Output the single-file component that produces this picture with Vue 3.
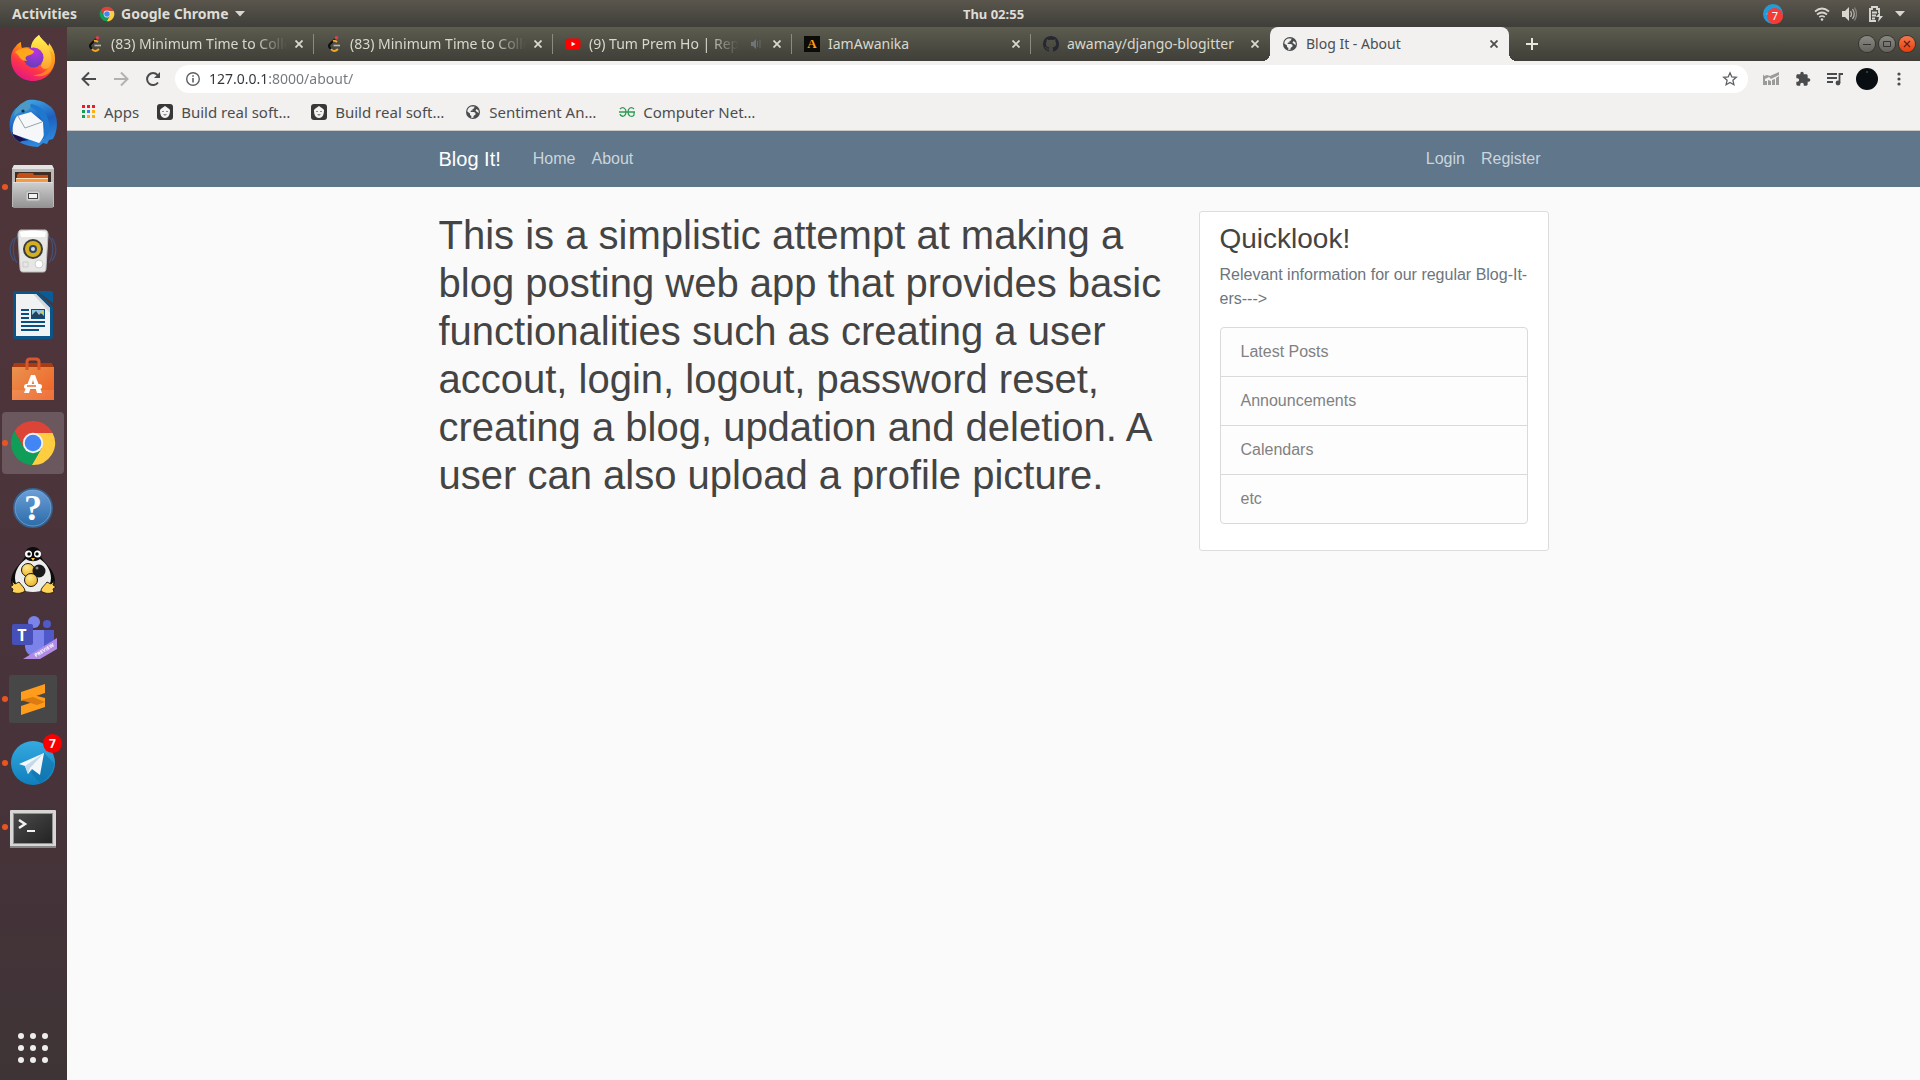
<script setup>
import { ref } from 'vue'

const dock = [
  { id: 'firefox', label: 'Firefox' },
  { id: 'thunderbird', label: 'Thunderbird' },
  { id: 'files', label: 'Files', running: true },
  { id: 'rhythmbox', label: 'Rhythmbox' },
  { id: 'writer', label: 'LibreOffice Writer' },
  { id: 'software', label: 'Ubuntu Software' },
  { id: 'chrome', label: 'Google Chrome', running: true, active: true },
  { id: 'help', label: 'Help', glyph: { text: '?', x: 24, y: 37, size: 36, family: 'Liberation Serif, serif' } },
  { id: 'penguin', label: 'Pingus' },
  { id: 'teams', label: 'Teams', glyph: { text: 'T', x: 13, y: 30, size: 16, family: 'Open Sans, sans-serif' }, ribbon: 'PREVIEW' },
  { id: 'sublime', label: 'Sublime Text', running: true },
  { id: 'telegram', label: 'Telegram', running: true, badge: '7' },
  { id: 'terminal', label: 'Terminal', running: true }
]

const tabs = [
  { icon: 'leetcode', title: '(83) Minimum Time to Collect', fade: true },
  { icon: 'leetcode', title: '(83) Minimum Time to Collect', fade: true },
  { icon: 'youtube', title: '(9) Tum Prem Ho | Reprise', fade: true, audio: true },
  { icon: 'awanika', title: 'IamAwanika', letter: 'A' },
  { icon: 'github', title: 'awamay/django-blogitter' },
  { icon: 'globe', title: 'Blog It - About', active: true }
]

const bookmarks = [
  { icon: 'face', title: 'Build real soft…' },
  { icon: 'face', title: 'Build real soft…' },
  { icon: 'globe', title: 'Sentiment An…' },
  { icon: 'gfg', title: 'Computer Net…' }
]

const quicklook = ['Latest Posts', 'Announcements', 'Calendars', 'etc']
const url = ref('127.0.0.1:8000/about/')
</script>

<template>
  <div class="desktop">
    <svg class="defs" width="0" height="0" aria-hidden="true">
      <defs>
        <linearGradient id="g-fox" x1="0.8" y1="0" x2="0.3" y2="1">
          <stop offset="0" stop-color="#fff44f" /><stop offset="0.4" stop-color="#ff980e" />
          <stop offset="0.7" stop-color="#ff3647" /><stop offset="1" stop-color="#e31587" />
        </linearGradient>
        <radialGradient id="g-foxball" cx="0.6" cy="0.2" r="0.9">
          <stop offset="0" stop-color="#b833e1" /><stop offset="1" stop-color="#5b3fb8" />
        </radialGradient>
        <linearGradient id="g-flame" x1="0" y1="0" x2="0" y2="1">
          <stop offset="0" stop-color="#fff44f" /><stop offset="1" stop-color="#ffa130" />
        </linearGradient>
        <linearGradient id="g-bird" x1="0.3" y1="0" x2="0.6" y2="1">
          <stop offset="0" stop-color="#3fa9e6" /><stop offset="0.5" stop-color="#1e5fbd" /><stop offset="1" stop-color="#2f8ee0" />
        </linearGradient>
        <linearGradient id="g-steel" x1="0" y1="0" x2="0" y2="1">
          <stop offset="0" stop-color="#cfcfcf" /><stop offset="1" stop-color="#929292" />
        </linearGradient>
        <linearGradient id="g-bag" x1="0" y1="0" x2="1" y2="1">
          <stop offset="0" stop-color="#ea9350" /><stop offset="1" stop-color="#ef5f22" />
        </linearGradient>
        <linearGradient id="g-help" x1="0" y1="0" x2="0" y2="1">
          <stop offset="0" stop-color="#6c9fd8" /><stop offset="1" stop-color="#2a6ba8" />
        </linearGradient>
        <linearGradient id="g-tg" x1="0" y1="0" x2="0" y2="1">
          <stop offset="0" stop-color="#34aadf" /><stop offset="1" stop-color="#0f7fbd" />
        </linearGradient>
        <linearGradient id="g-term" x1="0" y1="0" x2="1" y2="1">
          <stop offset="0" stop-color="#4a4a4a" /><stop offset="1" stop-color="#232323" />
        </linearGradient>
        <radialGradient id="g-ball" cx="0.4" cy="0.3" r="0.8">
          <stop offset="0" stop-color="#ffe98a" /><stop offset="1" stop-color="#e9ac1c" />
        </radialGradient>
      </defs>

      <symbol id="i-firefox" viewBox="0 0 48 48">
        <path d="M30 0c2 4 6 6 9 11 1-1 1-2 1-3 4 5 6 10 6 15 0 14-10 23-22 23S2 37 2 24c0-6 2-10 5-13 1-2 3-3 5-4 0 2 0 4 1 6 3-1 6-1 9 0 1-6 4-10 8-13z" fill="url(#g-fox)" />
        <path d="M30 0c2 4 6 6 9 11 4 6 6 12 3 19-3 5-8 5-10 1 2-6 1-10-3-14-4-2-7-3-7-5 1-6 4-9 8-12z" fill="url(#g-flame)" />
        <path d="M40 15c3 6 3 12 0 17-4 6-10 8-16 8 10 4 20-2 22-14 0-4-2-8-6-11z" fill="#ff9a1c" opacity="0.7" />
        <circle cx="24.500" cy="22.500" r="10" fill="url(#g-foxball)" />
        <path d="M6 17c4-4 13-5 19-1 0 3-4 4-7 5-2 1-2 3 0 5-5 0-7-3-9-6-1-1-2-2-3-3z" fill="#ffa61d" />
      </symbol>
      <symbol id="i-thunderbird" viewBox="0 0 48 48">
        <path d="M17 2c4-3 18-1 25 6 7 7 8 22 2 32l-4 1-2 4-4-1-5 4C14 47 4 42 1 31-1 20 4 9 12 6z" fill="url(#g-bird)" />
        <path d="M3 33c4 2 8 6 17 8l-7 1-2 1C7 41 4 38 3 33z" fill="#1d1250" />
        <path d="M8 17l14-4 12 10 1 17-5 4L4 35c-1-6 0-12 4-18z" fill="#f6f7f9" />
        <path d="M9 17l7 12 17-6" fill="none" stroke="#9aa3ae" stroke-width="1" />
        <path d="M12 6c6 0 11 2 16 6l6 11c4 6 2 14-3 20 9-5 11-15 8-23C36 10 27 2 12 6z" fill="#1f78cf" />
        <path d="M19 1c-8 3-13 8-14 17 4-5 8-6 13-6 4-3 5-7 1-11z" fill="#4b9ac8" />
        <circle cx="14" cy="12" r="1.600" fill="#162f52" />
      </symbol>
      <symbol id="i-files" viewBox="0 0 48 48">
        <path d="M5 2h38l2 4v38H3V6z" fill="#b9b9b9" />
        <path d="M5 2h38l2 4H3z" fill="#e3e3e3" />
        <rect x="6" y="9" width="36" height="12" fill="#402c20" />
        <path d="M8 12l2-2h14l1 2h14v8H8z" fill="#c64f16" />
        <path d="M7 15h32v5H7z" fill="#f49a45" /><path d="M7 15h32v1H7z" fill="#ffe1bd" />
        <rect x="4" y="19" width="40" height="26" rx="1" fill="url(#g-steel)" />
        <path d="M4 19h40v1H4z" fill="#dedede" />
        <rect x="17" y="28" width="14" height="10" rx="2" fill="#d2d2d2" stroke="#aaa" />
        <rect x="19.500" y="30.500" width="9" height="5" fill="#f2f2f2" stroke="#444" />
      </symbol>
      <symbol id="i-rhythmbox" viewBox="0 0 48 48">
        <g fill="none" stroke="#405987" stroke-width="1.200" opacity="0.8">
          <path d="M8 9c-5 7-5 19 0 27M5 11c-5 8-5 16 0 23M40 9c5 7 5 19 0 27M43 11c5 8 5 16 0 23" />
        </g>
        <path d="M12 3h24c2 0 3 2 3 5l-2 33c0 3-1 4-3 4H14c-2 0-3-1-3-4L9 8c0-3 1-5 3-5z" fill="#e6e6e5" stroke="#bebebc" />
        <path d="M11 5c8-2 18-2 26 0l-1 5H12z" fill="#fff" />
        <circle cx="24" cy="22" r="10" fill="#3c3b37" /><circle cx="24" cy="22" r="8" fill="#d4b01f" />
        <circle cx="24" cy="22" r="4" fill="#31466b" /><circle cx="24" cy="22" r="2" fill="#d7dce4" />
        <circle cx="30" cy="37" r="4" fill="#fff" stroke="#ccc" /><path d="M14 35h5v5h-5z" fill="none" stroke="#ccc" />
      </symbol>
      <symbol id="i-writer" viewBox="0 0 48 48">
        <path d="M6 0h22l16 16v30a2 2 0 0 1-2 2H6a2 2 0 0 1-2-2V2a2 2 0 0 1 2-2z" fill="#0b5487" />
        <path d="M7 3h20l14 14v28H7z" fill="#f1f2f3" /><path d="M27 3l14 14v5L24 3z" fill="#d5d8db" />
        <path d="M28 0h14a2 2 0 0 1 2 2v10z" fill="#0a5c97" />
        <path d="M12 18h8v2h-8zM12 22h8v2h-8zM12 26h8v2h-8zM12 30h24v2H12zM12 34h24v2H12zM12 38h18v2H12z" fill="#0b4f80" />
        <rect x="22" y="18" width="14" height="10" fill="#0b4f80" /><rect x="23" y="19" width="12" height="8" fill="#8fc6e4" />
        <path d="M23 27v-3l4-4 3 4 2-2 3 3v2z" fill="#23435c" /><circle cx="33" cy="21" r="1.500" fill="#e8c93c" />
      </symbol>
      <symbol id="i-software" viewBox="0 0 48 48">
        <path d="M5 8h38l2 5H3z" fill="#a83b10" />
        <path d="M3 12h42v33H3z" fill="url(#g-bag)" />
        <path d="M3 35h42v10H3z" fill="#fff" opacity="0.1" />
        <path d="M18 15V7q0-3 3-3h6q3 0 3 3v8" fill="none" stroke="#d9572a" stroke-width="3" />
        <path d="M22 20h4l7 18h-5l-4-13-4 13h-5z" fill="#fff" />
        <rect x="15" y="29" width="18" height="5" rx="2.500" fill="#fff" /><path d="M18 31h9" stroke="#ee6c2f" stroke-width="1.500" />
      </symbol>
      <symbol id="i-chrome" viewBox="0 0 48 48">
        <path d="M24 14H43.600A22 22 0 0 1 22.860 45.970L32.660 29z" fill="#ffcd40" />
        <path d="M32.660 29L22.860 45.970A22 22 0 0 1 5.540 12.030L15.340 29z" fill="#0f9d58" />
        <path d="M15.340 29L5.540 12.030A22 22 0 0 1 43.600 14H24z" fill="#db4437" />
        <circle cx="24" cy="24" r="10.200" fill="#f1f1f1" /><circle cx="24" cy="24" r="8.300" fill="#4285f4" />
      </symbol>
      <symbol id="i-help" viewBox="0 0 48 48">
        <circle cx="24" cy="25" r="19" fill="url(#g-help)" stroke="#34618f" stroke-width="2" />
        <circle cx="24" cy="25" r="18" fill="none" stroke="#8db5e0" opacity="0.6" />
      </symbol>
      <symbol id="i-penguin" viewBox="0 0 48 48">
        <path d="M24 0c6 0 8 4 8 8 0 4 4 7 9 13 5 7 6 13 4 17-1 3-5 3-8 2-8 5-18 5-26 0-3 1-7 1-8-2-2-4-1-10 4-17 5-6 9-9 9-13 0-4 2-8 8-8z" fill="#0c0c0c" />
        <path d="M17 12c-7 5-11 12-11 19 0 10 9 14 18 14s18-4 18-14c0-7-4-14-11-19-4 3-10 3-14 0z" fill="#ededed" />
        <circle cx="19.500" cy="7" r="3.500" fill="#fff" /><circle cx="28.500" cy="7" r="3.500" fill="#fff" />
        <circle cx="20" cy="7" r="1.700" /><circle cx="28" cy="7" r="1.700" /><path d="M22 11h4l-2 3z" fill="#ffc63b" />
        <circle cx="19" cy="23" r="6.500" fill="url(#g-ball)" stroke="#161616" /><circle cx="30" cy="24" r="6.500" fill="#1a1a1a" />
        <circle cx="28" cy="21" r="1.500" fill="#888" /><circle cx="22" cy="33" r="6.500" fill="url(#g-ball)" stroke="#161616" />
        <path d="M3 34l3 3 4-2c3 4 6 6 6 9-4 3-9 3-13 1l1-3-3-2 3-2zM45 34l-3 3-4-2c-3 4-6 6-6 9 4 3 9 3 13 1l-1-3 3-2-3-2z" fill="#ffd257" stroke="#2a2213" />
      </symbol>
      <symbol id="i-teams" viewBox="0 0 48 48">
        <circle cx="25" cy="11" r="6" fill="#7b83eb" /><circle cx="38" cy="13" r="4" fill="#5059c9" />
        <path d="M31 19h14v14q0 7-7 7t-7-7z" fill="#5059c9" /><path d="M16 19h19v17q0 9-9 9t-10-9z" fill="#7b83eb" />
        <path d="M48 27v11L31 48H14z" fill="#b18be4" />
        <rect x="3" y="13" width="21" height="21" rx="2" fill="#4650b8" />
      </symbol>
      <symbol id="i-sublime" viewBox="0 0 48 48">
        <rect width="48" height="48" rx="2" fill="#474747" />
        <path d="M12 17l24-8v9l-24 8z" fill="#ff9c1b" /><path d="M12 24l24 7v-8l-24-6z" fill="#ff9c1b" />
        <path d="M12 31l24-8v9l-24 8z" fill="#ff9c1b" /><path d="M12 25l16 5 8-3-12-5z" fill="#dd7a10" />
      </symbol>
      <symbol id="i-telegram" viewBox="0 0 48 48">
        <circle cx="24" cy="24" r="22" fill="url(#g-tg)" />
        <path d="M35 14l10 10c0 8-6 16-14 20l-9-10z" fill="#0b6ba3" opacity="0.5" />
        <path d="M10 25l25-11-4 22-8-6-4 5-3-8z" fill="#f4f7fa" />
        <path d="M16 27l19-13-14 15-2 6z" fill="#c3d9e8" />
      </symbol>
      <symbol id="i-terminal" viewBox="0 0 48 48">
        <rect x="1" y="7" width="46" height="37" rx="1" fill="#d6d6d5" />
        <path d="M1 43h46v2H1z" fill="#858585" />
        <rect x="4" y="10" width="40" height="31" fill="#929292" /><rect x="5" y="11" width="38" height="29" fill="url(#g-term)" />
        <path d="M10 17l6 4-6 4" fill="none" stroke="#f2f2f2" stroke-width="2.500" /><path d="M18 28h8" stroke="#f2f2f2" stroke-width="2" />
      </symbol>

      <symbol id="i-leetcode" viewBox="0 0 16 16">
        <path d="M9 3L4 8q-2 2 0 4l1 1" fill="none" stroke="#0e0e0e" stroke-width="2" />
        <path d="M7 5q2-1 4 1M5 13q3 4 7 0" fill="none" stroke="#f5a623" stroke-width="2" />
        <path d="M7.500 9.500H14" stroke="#b9b9ae" stroke-width="1.600" /><circle cx="10.500" cy="1.800" r="1.800" fill="#d8405a" />
      </symbol>
      <symbol id="i-youtube" viewBox="0 0 16 16">
        <rect x="0.500" y="2.500" width="15" height="11" rx="3" fill="#f00" /><path d="M6.500 5.700v4.600l4-2.300z" fill="#fff" />
      </symbol>
      <symbol id="i-awanika" viewBox="0 0 16 16">
        <rect width="16" height="16" fill="#0b0b08" />
      </symbol>
      <symbol id="i-github" viewBox="0 0 16 16">
        <path fill="#252831" d="M8 0C3.580 0 0 3.580 0 8c0 3.540 2.290 6.530 5.470 7.590.4.070.55-.17.55-.38 0-.19-.010-.82-.010-1.490-2.010.37-2.530-.49-2.690-.94-.090-.23-.48-.94-.82-1.130-.28-.15-.68-.52-.010-.53.63-.010 1.080.58 1.230.82.72 1.210 1.870.87 2.330.66.070-.52.28-.87.51-1.070-1.780-.2-3.640-.89-3.640-3.950 0-.87.31-1.590.82-2.150-.080-.2-.36-1.020.080-2.120 0 0 .67-.21 2.200.82.64-.18 1.320-.27 2-.27s1.360.090 2 .27c1.530-1.040 2.200-.82 2.200-.82.44 1.100.16 1.920.080 2.120.51.56.82 1.270.82 2.150 0 3.070-1.870 3.750-3.650 3.950.29.25.54.73.54 1.480 0 1.070-.010 1.930-.010 2.200 0 .21.15.46.55.38A8 8 0 0 0 16 8c0-4.420-3.580-8-8-8z" />
      </symbol>
      <symbol id="i-globe" viewBox="0 0 16 16">
        <circle cx="8" cy="8" r="7" fill="#4b4c4f" />
        <path d="M6 2.500h3.500L9 4.500 7.500 5v1.500H6L5.500 8H9l1.500 1v1.500L8.500 12v1.700h-2.500L6.500 12 5 11V9.500L2.300 7.500C2.400 5 4 3 6 2.500z" fill="#f1f0ee" />
        <path d="M11.500 5l2 1.500.3 2.500-1.800-1-1.500-1.500z" fill="#f1f0ee" />
      </symbol>
      <symbol id="i-face" viewBox="0 0 16 16">
        <rect width="16" height="16" rx="3" fill="#383838" />
        <path d="M8 2c1 1 4 2 5 4 0 4-1 8-5 8S3 10 3 6c1-2 4-3 5-4z" fill="#f3f3f3" />
        <path d="M5 7h2v1H5zM9 7h2v1H9zM6 10h4l-2 2z" fill="#8a8a8a" />
      </symbol>
      <symbol id="i-gfg" viewBox="0 0 16 16">
        <path d="M1 5q2-2 4-1 2 1 2 4t-2 4q-3 1-4-2M0 8h16M15 5q-2-2-4-1-2 1-2 4t2 4q3 1 4-1V8" fill="none" stroke="#2f9a55" stroke-width="1.300" />
      </symbol>
    </svg>

    <header class="topbar">
      <div class="top-left">
        <button type="button">Activities</button>
        <button type="button" class="app-menu">
          <svg width="16" height="16"><use href="#i-chrome" /></svg>
          <span>Google Chrome</span>
          <svg width="10" height="6" viewBox="0 0 10 6"><path d="M0 0h10L5 5.500z" fill="#d8d6d0" /></svg>
        </button>
      </div>
      <button type="button" class="clock">Thu 02:55</button>
      <div class="top-right">
        <div class="tray">
          <svg width="20" height="20" viewBox="0 0 20 20">
            <circle cx="10" cy="10" r="10" fill="#229bd6" /><path d="M3 10l3-1v2z" fill="#fff" />
            <circle cx="12" cy="12" r="8" fill="#f53b36" />
          </svg>
          <span>7</span>
        </div>
        <svg width="16" height="16" viewBox="0 0 16 16" fill="none" stroke="#d8d6d0" stroke-width="1.700">
          <path d="M1 5.500q7-6 14 0M3 8.500q5-4 10 0M5.300 11q2.700-2 5.400 0" /><circle cx="8" cy="13.500" r="1.300" fill="#d8d6d0" stroke="none" />
        </svg>
        <svg width="16" height="16" viewBox="0 0 16 16">
          <path d="M1 5h3l4-4v14l-4-4H1z" fill="#d8d6d0" />
          <path d="M9.500 5q2 3 0 6M11.500 3q3.500 5 0 10" fill="none" stroke="#b7b5af" stroke-width="1.300" /><path d="M13.500 1.500q4 6.500 0 13" fill="none" stroke="#85837d" stroke-width="1.300" />
        </svg>
        <svg width="16" height="18" viewBox="0 0 16 18">
          <path d="M8 16H2V4h2V2h5v2h2v4M4 7.500h5M4 10.500h4M4 13.500h3" fill="none" stroke="#d8d6d0" stroke-width="1.900" />
          <path d="M12 7l-4 5h3l-1 5 5-6h-3z" fill="#d8d6d0" />
        </svg>
        <svg width="10" height="6" viewBox="0 0 10 6"><path d="M0 0h10L5 5.500z" fill="#d8d6d0" /></svg>
      </div>
    </header>

    <div class="workspace">
      <nav class="dock" aria-label="Dock">
        <button v-for="app in dock" :key="app.id" type="button" class="dock-item" :class="{ active: app.active, running: app.running }" :aria-label="app.label">
          <svg width="48" height="48" viewBox="0 0 48 48">
            <use :href="'#i-' + app.id" width="48" height="48" />
            <text v-if="app.glyph" :x="app.glyph.x" :y="app.glyph.y" :font-size="app.glyph.size" :font-family="app.glyph.family" font-weight="700" text-anchor="middle" fill="#fff">{{ app.glyph.text }}</text>
            <text v-if="app.ribbon" x="35" y="41" transform="rotate(-31 35 39)" text-anchor="middle" font-family="Open Sans, sans-serif" font-size="5" font-weight="700" fill="#fff">{{ app.ribbon }}</text>
          </svg>
          <span v-if="app.badge" class="badge">{{ app.badge }}</span>
        </button>
        <button type="button" class="dock-item show-apps" aria-label="Show Applications">
          <svg width="30" height="30" viewBox="0 0 30 30" fill="#efeeed">
            <template v-for="r in 3" :key="r">
              <circle v-for="c in 3" :key="c" :cx="c * 12 - 9" :cy="r * 12 - 9" r="3" />
            </template>
          </svg>
        </button>
      </nav>

      <section class="browser">
        <div class="tabstrip">
          <div v-for="(tab, i) in tabs" :key="i" class="tab" :class="{ active: tab.active, last: i === 4 }">
            <button type="button" class="tab-main">
              <svg class="favicon" width="16" height="16" viewBox="0 0 16 16">
                <use :href="'#i-' + tab.icon" width="16" height="16" />
                <text v-if="tab.letter" x="8" y="12" text-anchor="middle" font-family="Liberation Serif, serif" font-weight="700" font-size="13" fill="#ff9c12">{{ tab.letter }}</text>
              </svg>
              <span class="tab-title" :class="{ fade: tab.fade }">{{ tab.title }}</span>
              <svg v-if="tab.audio" class="audio" width="10" height="10" viewBox="0 0 10 10"><path d="M0 3h2l3-3v10L2 7H0z" fill="#6e7578" /><path d="M6.500 2v6M9 1v8" stroke="#66696a" /></svg>
            </button>
            <button type="button" class="tab-close" aria-label="Close tab">
              <svg width="8" height="8" viewBox="0 0 8 8"><path d="M.5.5l7 7M7.500.5l-7 7" stroke="currentColor" stroke-width="1.800" /></svg>
            </button>
          </div>
          <button type="button" class="new-tab" aria-label="New tab">
            <svg width="12" height="12" viewBox="0 0 12 12"><path d="M6 0v12M0 6h12" stroke="#e8e7df" stroke-width="2" /></svg>
          </button>
          <div class="win-buttons">
            <button type="button" aria-label="Minimize"><svg width="8" height="8" viewBox="0 0 8 8"><path d="M0 4.500h8" stroke="#34332f" /></svg></button>
            <button type="button" aria-label="Maximize"><svg width="8" height="8" viewBox="0 0 8 8"><path d="M.5 1.500h7v5h-7z" fill="none" stroke="#34332f" /></svg></button>
            <button type="button" class="win-close" aria-label="Close"><svg width="8" height="8" viewBox="0 0 8 8"><path d="M1 1l6 6M7 1L1 7" stroke="#5b2412" stroke-width="1.300" /></svg></button>
          </div>
        </div>

        <div class="toolbar">
          <button type="button" aria-label="Back"><svg width="16" height="16" viewBox="0 0 16 16" fill="none" stroke="#4a4b4d" stroke-width="2"><path d="M15 8H2M8 1.500L1.500 8 8 14.500" /></svg></button>
          <button type="button" aria-label="Forward" disabled><svg width="16" height="16" viewBox="0 0 16 16" fill="none" stroke="#b2b1af" stroke-width="2"><path d="M1 8h13M8 1.500L14.500 8 8 14.500" /></svg></button>
          <button type="button" aria-label="Reload"><svg width="16" height="16" viewBox="0 0 16 16"><path d="M13 11.500A6 6 0 1 1 12.500 4" fill="none" stroke="#4a4b4d" stroke-width="2" /><path d="M15 1v6H9z" fill="#4a4b4d" /></svg></button>
          <div class="omnibox">
            <svg width="16" height="16" viewBox="0 0 16 16"><circle cx="8" cy="8" r="6.300" fill="none" stroke="#5f6063" stroke-width="1.400" /><path d="M8 7v4.500M8 4.200v1.600" stroke="#5f6063" stroke-width="1.600" /></svg>
            <input v-model="url" type="text" aria-label="Address and search bar" spellcheck="false" />
            <button type="button" aria-label="Bookmark this tab"><svg width="16" height="16" viewBox="0 0 16 16"><path d="M8 1.800l1.800 4.100 4.500.4-3.400 3 1 4.400L8 11.400l-3.900 2.300 1-4.400-3.400-3 4.500-.4z" fill="none" stroke="#5f6063" stroke-width="1.300" /></svg></button>
          </div>
          <div class="extensions">
            <button type="button" aria-label="Analytics extension"><svg width="16" height="16" viewBox="0 0 16 16" fill="#9b9b9a"><path d="M0 3l1 2 3-1 3 1 9-4v3L8 8 6 6 2 8v2H0zM0 10h4v4H0zM5 9l3 1v4H5zM9 9l3-1v6H9zM13 7l3-2v9h-3z" /></svg></button>
            <button type="button" aria-label="Extensions"><svg width="16" height="16" viewBox="0 0 24 24" fill="#4a4b4d"><path d="M20.500 11H19V7c0-1.100-.9-2-2-2h-4V3.500a2.500 2.500 0 0 0-5 0V5H4c-1.100 0-2 .9-2 2v3.800h1.500a2.700 2.700 0 0 1 0 5.400H2V20c0 1.100.9 2 2 2h3.800v-1.500a2.700 2.700 0 0 1 5.400 0V22H17c1.100 0 2-.9 2-2v-4h1.500a2.500 2.500 0 0 0 0-5z" /></svg></button>
            <button type="button" aria-label="Media controls"><svg width="16" height="16" viewBox="0 0 16 16"><path d="M0 3h10M0 7h10M0 11h6M12.500 12V3H16" fill="none" stroke="#4a4b4d" stroke-width="1.800" /><circle cx="11" cy="12" r="2.400" fill="#4a4b4d" /></svg></button>
            <button type="button" aria-label="Profile"><svg width="22" height="22" viewBox="0 0 22 22"><circle cx="11" cy="11" r="11" fill="#080e11" /><circle cx="11" cy="4" r="1" fill="#4b4a3a" /></svg></button>
            <button type="button" aria-label="Menu"><svg width="16" height="16" viewBox="0 0 16 16" fill="#4a4b4d"><circle cx="8" cy="3" r="1.600" /><circle cx="8" cy="8" r="1.600" /><circle cx="8" cy="13" r="1.600" /></svg></button>
          </div>
        </div>

        <nav class="bookmarks" aria-label="Bookmarks">
          <a href="#" class="apps">
            <svg width="14" height="14" viewBox="0 0 14 14">
              <path d="M0 0h3v3H0zM5 0h3v3H5zM10 0h3v3h-3z" fill="#ea1c2c" /><path d="M0 5h3v3H0zM0 10h3v3H0z" fill="#12a150" />
              <path d="M5 5h3v3H5z" fill="#3f7ff0" /><path d="M10 5h3v3h-3zM5 10h3v3H5zM10 10h3v3h-3z" fill="#fbb012" />
            </svg>
            <span>Apps</span>
          </a>
          <a v-for="(b, i) in bookmarks" :key="i" href="#" class="bookmark">
            <svg width="16" height="16"><use :href="'#i-' + b.icon" /></svg>
            <span>{{ b.title }}</span>
          </a>
        </nav>

        <div class="page">
          <header class="site-header">
            <nav class="container site-nav">
              <a href="#" class="brand">Blog It!</a>
              <a href="#" class="nav-link">Home</a>
              <a href="#" class="nav-link">About</a>
              <span class="spacer"></span>
              <a href="#" class="nav-link">Login</a>
              <a href="#" class="nav-link">Register</a>
            </nav>
          </header>
          <main class="container content">
            <h1>This is a simplistic attempt at making a blog posting web app that provides basic functionalities such as creating a user accout, login, logout, password reset, creating a blog, updation and deletion. A user can also upload a profile picture.</h1>
            <aside class="card">
              <h3>Quicklook!</h3>
              <p>Relevant information for our regular Blog-It-ers---&gt;</p>
              <ul>
                <li v-for="item in quicklook" :key="item">{{ item }}</li>
              </ul>
            </aside>
          </main>
        </div>
      </section>
    </div>
  </div>
</template>

<style>
body {
  margin: 0;
}
</style>

<style scoped>
* {
  box-sizing: border-box;
}
.desktop {
  display: flex;
  flex-direction: column;
  min-height: 100vh;
  font-family: "Noto Sans", "Open Sans", sans-serif;
  font-size: 14px;
}
.defs {
  position: absolute;
}
button {
  display: flex;
  align-items: center;
  justify-content: center;
  border: 0;
  padding: 0;
  background: none;
  color: inherit;
  font: inherit;
}
a {
  color: inherit;
  text-decoration: none;
}
svg {
  display: block;
  flex: none;
}

.topbar {
  display: grid;
  grid-template-columns: 67px 1fr auto 1fr;
  align-items: center;
  height: 27px;
  background: linear-gradient(#5a564d, #3f3e39);
  color: #dfdcd5;
  font-weight: 700;
}
.top-left,
.top-right,
.app-menu {
  display: flex;
  align-items: center;
}
.top-left {
  grid-column: 1 / 3;
  gap: 22px;
  padding-left: 12px;
}
.app-menu {
  gap: 6px;
}
.clock {
  font-size: 13px;
}
.top-right {
  justify-content: flex-end;
  gap: 11px;
  padding-right: 15px;
}
.tray {
  position: relative;
  margin-right: 20px;
}
.tray span {
  position: absolute;
  left: 4px;
  top: 4px;
  width: 16px;
  color: #fff;
  font-size: 11px;
  font-weight: 400;
  line-height: 16px;
  text-align: center;
}

.workspace {
  display: flex;
  flex: 1;
}
.dock {
  display: flex;
  flex-direction: column;
  gap: 2px;
  flex: none;
  width: 67px;
  padding: 1px 3px 1px 2px;
  background: linear-gradient(#50363a, #48333a 70%, #3e3436);
}
.dock-item {
  position: relative;
  width: 62px;
  height: 62px;
  border-radius: 4px;
}
.dock-item.active {
  background: #6b585e;
}
.dock-item.running::before {
  content: "";
  position: absolute;
  left: 0;
  top: 28px;
  width: 6px;
  height: 6px;
  border-radius: 50%;
  background: #e95420;
}
.badge {
  position: absolute;
  top: 2px;
  right: 2px;
  width: 19px;
  height: 19px;
  border-radius: 50%;
  background: #f90000;
  color: #fff;
  font-size: 12px;
  font-weight: 700;
  line-height: 19px;
  text-align: center;
}
.show-apps {
  margin-top: auto;
}

.browser {
  display: flex;
  flex-direction: column;
  flex: 1;
  min-width: 0;
  background: #f2f1ef;
  color: #4c4d4f;
}
.tabstrip {
  display: flex;
  align-items: stretch;
  height: 34px;
  padding: 0 5px 0 8px;
  background: linear-gradient(#5d5c4f, #3f3e38);
  color: #d9d8cd;
}
.tab {
  position: relative;
  display: flex;
  align-items: center;
  flex: 0 1 239px;
  min-width: 0;
  padding: 0 7px 0 12px;
}
.tab::after {
  content: "";
  position: absolute;
  right: 0;
  top: 7px;
  width: 1px;
  height: 20px;
  background: #8c8b82;
}
.tab.active::after,
.tab.last::after {
  display: none;
}
.tab.active {
  border-radius: 8px 8px 0 0;
  background: #f2f1ef;
  color: #4c4d4f;
}
.tab.active::before {
  content: "";
  position: absolute;
  left: -8px;
  right: -8px;
  bottom: 0;
  height: 8px;
  background:
    radial-gradient(circle at 0 0, transparent 8px, #f2f1ef 8px) left / 8px 8px no-repeat,
    radial-gradient(circle at 100% 0, transparent 8px, #f2f1ef 8px) right / 8px 8px no-repeat;
}
.tab-main {
  flex: 1;
  min-width: 0;
  gap: 8px;
  text-align: left;
}
.tab-title {
  flex: 1;
  min-width: 0;
  padding-bottom: 2px;
  overflow: hidden;
  white-space: nowrap;
}
.tab-title.fade {
  mask-image: linear-gradient(to left, transparent 4px, #000 36px);
}
.tab-close {
  width: 16px;
  height: 16px;
  flex: none;
}
.audio {
  margin-right: 8px;
}
.new-tab {
  width: 28px;
  margin-left: 9px;
}
.win-buttons {
  display: flex;
  align-items: center;
  gap: 4px;
  margin-left: auto;
}
.win-buttons button {
  width: 16px;
  height: 16px;
  border-radius: 50%;
  background: linear-gradient(#8a8983, #64635d);
  box-shadow: 0 0 0 1px #35342f;
}
.win-buttons .win-close {
  background: linear-gradient(#f6784f, #e93d0b);
}

.toolbar {
  display: flex;
  align-items: center;
  height: 36px;
  padding: 0 5px 0 14px;
}
.toolbar > button {
  width: 16px;
  margin-right: 16px;
}
.omnibox {
  display: flex;
  align-items: center;
  flex: 1;
  gap: 8px;
  height: 28px;
  margin: 0 7px 0 -2px;
  padding: 0 10px;
  border-radius: 14px;
  background: #fff;
}
.omnibox input {
  flex: 1;
  min-width: 0;
  padding: 0 0 2px;
  border: 0;
  outline: 0;
  background: linear-gradient(to right, #333436 59px, #75767a 59px);
  background-clip: text;
  color: transparent;
  font: inherit;
}
.extensions {
  display: flex;
  align-items: center;
}
.extensions button {
  width: 32px;
}

.bookmarks {
  display: flex;
  align-items: center;
  gap: 18px;
  height: 34px;
  padding: 0 15px 4px;
  border-bottom: 1px solid #c9c8c6;
  font-size: 15px;
}
.bookmarks a {
  display: flex;
  align-items: center;
  gap: 8px;
  white-space: nowrap;
}
.bookmark {
  width: 136px;
}

.page {
  flex: 1;
  background: #fafafa;
  color: #444;
  font-family: "Liberation Sans", Arial, sans-serif;
  font-size: 16px;
  line-height: 24px;
}
.container {
  width: 100%;
  max-width: 1140px;
  margin: 0 auto;
  padding: 0 15px;
}
.site-header {
  background: #5f768b;
}
.site-nav {
  display: flex;
  align-items: center;
  height: 56px;
}
.brand {
  margin-right: 24px;
  color: #fff;
  font-size: 20px;
}
.nav-link {
  padding: 8px;
  color: #cbd5db;
}
.spacer {
  flex: 1;
}
.content {
  display: flex;
  align-items: flex-start;
  gap: 30px;
  padding-top: 24px;
}
h1 {
  flex: 1;
  margin: 0;
  font-size: 40px;
  font-weight: 400;
  line-height: 48px;
}
.card {
  flex: 0 0 350px;
  padding: 10px 20px;
  border: 1px solid #ddd;
  border-radius: 3px;
  background: #fff;
}
h3 {
  margin: 0 0 7px;
  font-size: 28px;
  font-weight: 400;
  line-height: 34px;
}
.card p {
  margin: 0 0 16px;
  color: #6c757d;
}
ul {
  margin: 0 0 16px;
  padding: 0;
  border: 1px solid #dadada;
  border-radius: 4px;
  background: #fdfdfd;
  color: #818182;
  list-style: none;
}
li {
  padding: 12px 20px;
}
li + li {
  border-top: 1px solid #dadada;
}
</style>
